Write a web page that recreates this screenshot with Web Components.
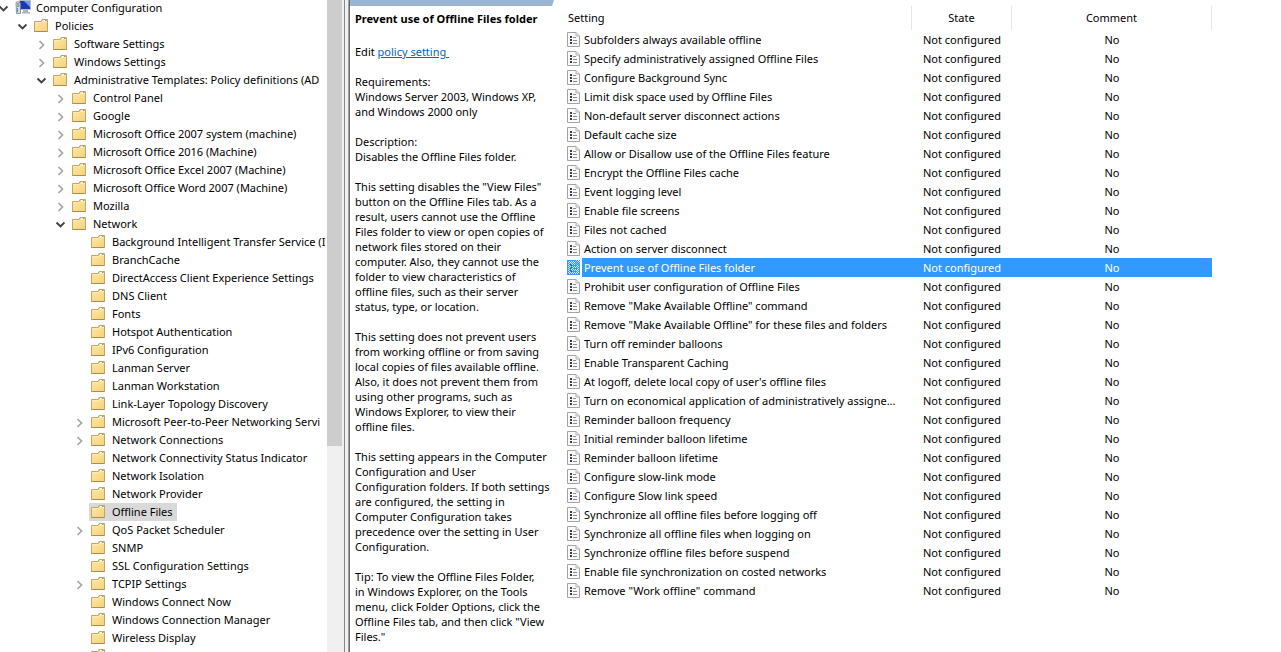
<!DOCTYPE html>
<html lang="en">
<head>
<meta charset="utf-8">
<title>Group Policy Management Editor</title>
<style>
html, body { margin: 0; height: 100%; background: #fff; }
body { font: 11px/15px "Noto Sans", "Open Sans", sans-serif; color: #000; overflow: hidden; }
</style>
</head>
<body>
<policy-editor></policy-editor>

<template id="t-editor">
  <style>
    :host { display: flex; height: 100vh; overflow: hidden; }
    policy-tree { flex: 0 0 327px; }
    scroll-track { flex: 0 0 15px; }
    pane-splitter { flex: 0 0 8px; }
    policy-detail { flex: 0 0 204px; }
    policy-list { flex: 1 1 0; min-width: 0; }
  </style>
  <policy-tree></policy-tree>
  <scroll-track></scroll-track>
  <pane-splitter></pane-splitter>
  <policy-detail>
    <span slot="title">Prevent use of Offline Files folder</span>
    <p>Requirements:<br>Windows Server 2003, Windows XP,<br>and Windows 2000 only</p>
    <p>Description:<br>Disables the Offline Files folder.</p>
    <p>This setting disables the "View Files"<br>button on the Offline Files tab. As a<br>result, users cannot use the Offline<br>Files folder to view or open copies of<br>network files stored on their<br>computer. Also, they cannot use the<br>folder to view characteristics of<br>offline files, such as their server<br>status, type, or location.</p>
    <p>This setting does not prevent users<br>from working offline or from saving<br>local copies of files available offline.<br>Also, it does not prevent them from<br>using other programs, such as<br>Windows Explorer, to view their<br>offline files.</p>
    <p>This setting appears in the Computer<br>Configuration and User<br>Configuration folders. If both settings<br>are configured, the setting in<br>Computer Configuration takes<br>precedence over the setting in User<br>Configuration.</p>
    <p>Tip: To view the Offline Files Folder,<br>in Windows Explorer, on the Tools<br>menu, click Folder Options, click the<br>Offline Files tab, and then click "View<br>Files."</p>
  </policy-detail>
  <policy-list></policy-list>
</template>

<template id="t-tree">
  <style>
    :host { display: block; overflow: hidden; }
    .rows { margin-top: -1px; }
  </style>
  <div class="rows" role="tree"></div>
</template>

<template id="t-node">
  <style>
    :host { display: flex; align-items: center; height: 18px; padding-left: calc(var(--level) * 19px); white-space: nowrap; }
    .arrow { flex: 0 0 13px; display: flex; height: 18px; align-items: center; }
    .arrow svg { flex: none; margin-left: -2px; }
    .item { display: flex; align-items: center; gap: 5px; height: 18px; padding: 0 4px 0 2px; }
    :host([selected]) .item { background: #d9d9d9; }
    .item svg { flex: none; display: block; }
    .label { padding-bottom: 2px; }
  </style>
  <span class="arrow"></span>
  <span class="item"><span class="icon"></span><span class="label"><slot></slot></span></span>
</template>

<template id="t-scroll">
  <style>
    :host { display: block; background: #f0f0f0; }
    div { height: 68.4%; background: #cdcdcd; }
  </style>
  <div role="scrollbar" aria-label="Tree scroll position" aria-orientation="vertical" aria-valuenow="0"></div>
</template>

<template id="t-splitter">
  <style>
    :host { display: flex; background: #f0f0f0; }
    i { display: block; height: 100%; }
    .edge { flex: 0 0 1px; margin: 0 3px 0 2px; background: #828790; }
    .shade { flex: 0 0 1px; background: #a0a0a0; }
    .dark { flex: 0 0 1px; background: #696969; }
  </style>
  <i class="edge"></i><i class="shade"></i><i class="dark"></i>
</template>

<template id="t-detail">
  <style>
    :host { display: block; overflow: hidden; white-space: nowrap; }
    .band { height: 6px; background: #9ab4d3; clip-path: polygon(0 0, 100% 0, calc(100% - 2px) 100%, 0 100%); }
    .body { padding: 5px 0 0 5px; }
    h1 { margin: 0 0 18px; font: inherit; font-weight: bold; }
    .edit { margin: 0 0 15px; }
    a { color: #0563b8; white-space: pre; }
    ::slotted(p) { margin: 0 0 15px; }
  </style>
  <div class="band"></div>
  <div class="body">
    <h1><slot name="title"></slot></h1>
    <p class="edit">Edit <a href="#policy">policy setting </a></p>
    <slot></slot>
  </div>
</template>

<template id="t-list">
  <style>
    :host { display: block; overflow: hidden; padding: 6px 0 0 8px; }
    table { width: 650px; table-layout: fixed; border-collapse: separate; border-spacing: 0; }
    .c-icon { width: 20px; } .c-state { width: 100px; } .c-comment { width: 200px; }
    th { box-sizing: border-box; height: 24px; padding: 0 0 2px; font-weight: normal; text-align: center; border-right: 1px solid #e5e5e5; }
    th:first-child { text-align: left; padding-left: 6px; }
    td { height: 19px; padding: 0; text-align: center; white-space: nowrap; }
    td:nth-child(1) { padding-left: 5px; }
    td:nth-child(2) { text-align: left; padding-left: 2px; }
    td svg { display: block; }
    tr.selected td:not(:first-child) { background: #3399ff; color: #fff; }
  </style>
  <table>
    <colgroup><col class="c-icon"><col><col class="c-state"><col class="c-comment"></colgroup>
    <thead><tr><th colspan="2" scope="col">Setting</th><th scope="col">State</th><th scope="col">Comment</th></tr></thead>
    <tbody></tbody>
  </table>
</template>

<script>
const FOLDER = `<svg width="16" height="16" viewBox="0 0 16 16" aria-hidden="true">
  <defs><linearGradient id="f" x1="0" y1="0" x2="1" y2="1"><stop offset="0" stop-color="#ffe7a0"/><stop offset="1" stop-color="#f5d27c"/></linearGradient></defs>
  <path d="M.5 3.500H7L8 1.500h5.500v12H.5z" fill="#ecd28b" stroke="#c4a664"/>
  <path d="M9 2.500h3.500" stroke="#fffbea"/><path d="M11 2.500h1.500" stroke="#6e9cab"/>
  <path d="M1 4.500h7l1-1h4V13H1z" fill="url(#f)"/>
  <path d="M1 4.500h6.500L8.500 3.500H13" fill="none" stroke="#fff3c8" stroke-width=".7"/>
  <path d="M.5 13.500h13" stroke="#ac8c4e"/></svg>`;
const COMPUTER = `<svg width="16" height="16" viewBox="0 0 16 16" aria-hidden="true">
  <path d="M4.500 .5h11v9h-11z" fill="#1c39b5" stroke="#b9bcc8"/>
  <path d="M9 1h6v6z" fill="#6f9ce8"/>
  <path d="M8 10h5v2h2v1.500H7V12h1z" fill="#aeb2bd"/>
  <path d="M1 2.500 3 1.500 5.500 3v10.500h-4z" fill="#d4dbe2" stroke="#71818e" stroke-width=".8"/>
  <path d="M2 4h2.500M2 6h2.500" stroke="#526b86"/><path d="M2.500 8v4" stroke="#4ba0b7"/></svg>`;
const CLOSED = `<svg width="10" height="12" viewBox="0 0 10 12" aria-hidden="true"><path d="M3.500 3 7.500 7 3.500 11" fill="none" stroke="#a6a6a6" stroke-width="1.700"/></svg>`;
const OPEN = `<svg width="10" height="12" viewBox="0 0 10 12" aria-hidden="true"><path d="M1.500 4.500 5.500 8.500 9.500 4.500" fill="none" stroke="#404040" stroke-width="1.900"/></svg>`;
const sheet = (selected) => {
  const fill = selected ? '#cfe6ff' : '#fafafa', line = selected ? '#4f96dc' : '#a3a3a3';
  const dots = selected ? '#1f5fa6' : '#3b3b4d', rule = selected ? '#4a90d8' : '#8a8795';
  let dither = '';
  if (selected) for (let y = 0; y < 15; y++) for (let x = y % 2; x < 13; x += 2) dither += `M${x} ${y}h1v1h-1z`;
  return `<svg width="13" height="15" viewBox="0 0 13 15" aria-hidden="true">
  <path d="M.5.5h8.500l3.500 3.500v10.500H.5z" fill="${fill}" stroke="${line}"/><path d="M9 .5V4h3.500" fill="${selected ? fill : '#e4e4e4'}" stroke="${selected ? line : '#b5b5b5'}"/>
  <path d="M3 4h2v2H3zM3 7h2v2H3zM3 10h2v2H3z" fill="${dots}"/>
  <path d="M6 5.500h3M6 8.500h4M6 11.500h4" stroke="${rule}"/>
  <path d="${dither}" fill="#3399ff" shape-rendering="crispEdges"/></svg>`;
};

// [level, label, arrow]
const NODES = [
  [0, 'Computer Configuration', 'open'], [1, 'Policies', 'open'],
  [2, 'Software Settings', 'closed'], [2, 'Windows Settings', 'closed'],
  [2, 'Administrative Templates: Policy definitions (AD', 'open'],
  [3, 'Control Panel', 'closed'], [3, 'Google', 'closed'],
  [3, 'Microsoft Office 2007 system (machine)', 'closed'], [3, 'Microsoft Office 2016 (Machine)', 'closed'],
  [3, 'Microsoft Office Excel 2007 (Machine)', 'closed'], [3, 'Microsoft Office Word 2007 (Machine)', 'closed'],
  [3, 'Mozilla', 'closed'], [3, 'Network', 'open'],
  [4, 'Background Intelligent Transfer Service (I'], [4, 'BranchCache'],
  [4, 'DirectAccess Client Experience Settings'], [4, 'DNS Client'], [4, 'Fonts'],
  [4, 'Hotspot Authentication'], [4, 'IPv6 Configuration'], [4, 'Lanman Server'],
  [4, 'Lanman Workstation'], [4, 'Link-Layer Topology Discovery'],
  [4, 'Microsoft Peer-to-Peer Networking Servi', 'closed'], [4, 'Network Connections', 'closed'],
  [4, 'Network Connectivity Status Indicator'], [4, 'Network Isolation'], [4, 'Network Provider'],
  [4, 'Offline Files'], [4, 'QoS Packet Scheduler', 'closed'], [4, 'SNMP'],
  [4, 'SSL Configuration Settings'], [4, 'TCPIP Settings', 'closed'], [4, 'Windows Connect Now'],
  [4, 'Windows Connection Manager'], [4, 'Wireless Display'], [4, '']
];
const SETTINGS = [
  'Subfolders always available offline', 'Specify administratively assigned Offline Files',
  'Configure Background Sync', 'Limit disk space used by Offline Files',
  'Non-default server disconnect actions', 'Default cache size',
  'Allow or Disallow use of the Offline Files feature', 'Encrypt the Offline Files cache',
  'Event logging level', 'Enable file screens', 'Files not cached', 'Action on server disconnect',
  'Prevent use of Offline Files folder', 'Prohibit user configuration of Offline Files',
  'Remove "Make Available Offline" command', 'Remove "Make Available Offline" for these files and folders',
  'Turn off reminder balloons', 'Enable Transparent Caching',
  "At logoff, delete local copy of user's offline files",
  'Turn on economical application of administratively assigne...', 'Reminder balloon frequency',
  'Initial reminder balloon lifetime', 'Reminder balloon lifetime', 'Configure slow-link mode',
  'Configure Slow link speed', 'Synchronize all offline files before logging off',
  'Synchronize all offline files when logging on', 'Synchronize offline files before suspend',
  'Enable file synchronization on costed networks', 'Remove "Work offline" command'
];

class Base extends HTMLElement {
  constructor() {
    super();
    const t = document.getElementById(this.constructor.template);
    this.attachShadow({ mode: 'open' }).append(t.content.cloneNode(true));
  }
}
customElements.define('tree-node', class extends Base {
  static template = 't-node';
  connectedCallback() {
    const level = this.getAttribute('level');
    this.style.setProperty('--level', level);
    const arrow = this.getAttribute('arrow');
    this.shadowRoot.querySelector('.arrow').innerHTML = arrow === 'open' ? OPEN : arrow ? CLOSED : '';
    this.shadowRoot.querySelector('.icon').innerHTML = level === '0' ? COMPUTER : FOLDER;
  }
});
customElements.define('policy-tree', class extends Base {
  static template = 't-tree';
  connectedCallback() {
    const rows = this.shadowRoot.querySelector('.rows');
    for (const [level, label, arrow] of NODES) {
      const n = document.createElement('tree-node');
      n.setAttribute('role', 'treeitem');
      n.setAttribute('level', level);
      if (arrow) n.setAttribute('arrow', arrow);
      if (label === 'Offline Files') n.toggleAttribute('selected', true);
      n.textContent = label;
      rows.append(n);
    }
  }
});
customElements.define('scroll-track', class extends Base { static template = 't-scroll'; });
customElements.define('pane-splitter', class extends Base { static template = 't-splitter'; });
customElements.define('policy-detail', class extends Base { static template = 't-detail'; });
customElements.define('policy-list', class extends Base {
  static template = 't-list';
  connectedCallback() {
    const body = this.shadowRoot.querySelector('tbody');
    for (const name of SETTINGS) {
      const selected = name === 'Prevent use of Offline Files folder';
      const tr = body.insertRow();
      if (selected) tr.className = 'selected';
      tr.insertCell().innerHTML = sheet(selected);
      for (const text of [name, 'Not configured', 'No']) tr.insertCell().textContent = text;
    }
  }
});
customElements.define('policy-editor', class extends Base { static template = 't-editor'; });
</script>
</body>
</html>
